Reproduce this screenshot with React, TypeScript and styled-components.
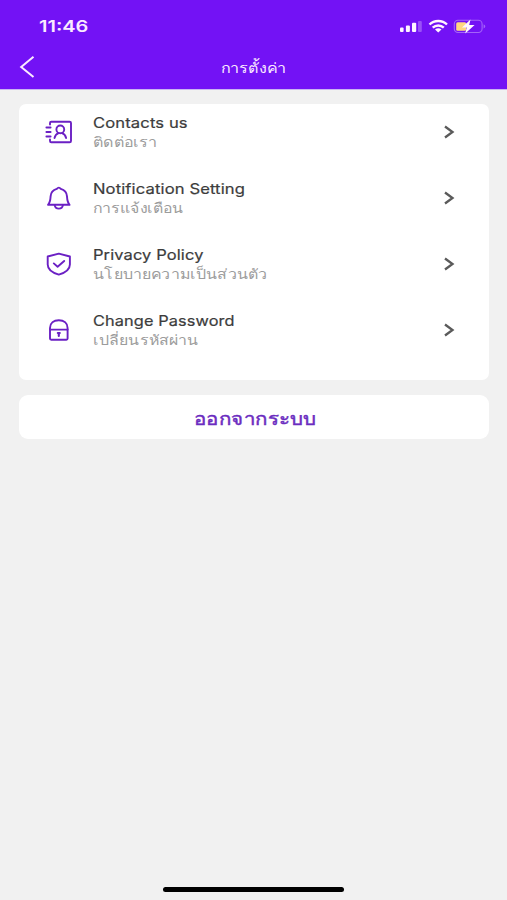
import React from "react";
import styled, { createGlobalStyle } from "styled-components";

const GlobalStyle = createGlobalStyle`
  * { box-sizing: border-box; }
  body { margin: 0; background: #f1f1f1; font-family: Inter, "Noto Sans", sans-serif; }
`;

const Screen = styled.main`
  display: flex;
  flex-direction: column;
  height: 900px;
  background: #f1f1f1;
  overflow: hidden;
`;

const Header = styled.header`
  height: 89px;
  background: #7312f5;
  box-shadow: 0 1px 0 #cbb4f3;
  color: #fbeaff;
`;

const StatusBar = styled.div`
  display: flex;
  align-items: center;
  justify-content: space-between;
  height: 51px;
  padding: 0 20px 0 39px;
`;

const Stretch = styled.span<{ $x: number; $origin?: string }>`
  display: inline-block;
  white-space: nowrap;
  transform: scaleX(${(p) => p.$x});
  transform-origin: ${(p) => p.$origin ?? "left"} center;
`;

const Clock = styled.div`
  font-size: 16px;
  font-weight: 600;
  line-height: 20px;
`;

const StatusIcons = styled.svg`
  display: block;
  width: 88px;
  height: 18px;
`;

const NavBar = styled.div`
  display: grid;
  grid-template-columns: 60px 1fr 60px;
  align-items: center;
  height: 32px;
`;

const BackButton = styled.button`
  display: flex;
  border: 0;
  padding: 0 0 0 19px;
  background: none;
  color: inherit;
`;

const Title = styled.h1`
  margin: 2px 0 0;
  font-size: 14px;
  font-weight: 400;
  line-height: 20px;
  text-align: center;
`;

const Content = styled.div`
  display: flex;
  flex-direction: column;
  flex: 1;
  gap: 15px;
  padding: 15px 18px 0 19px;
`;

const Card = styled.section`
  height: 276px;
  border-radius: 7px;
  background: #fff;
`;

const Row = styled.div`
  display: grid;
  grid-template-columns: 28px 1fr 12px;
  align-items: center;
  column-gap: 20px;
  height: 65.85px;
  padding: 0 34px 9px 26px;
`;

const RowIcon = styled.svg`
  display: block;
  width: 28px;
  height: 28px;
  fill: none;
  stroke: #6b20c4;
  stroke-width: 1.9;
  stroke-linejoin: round;
  stroke-linecap: round;
`;

const Labels = styled.div`
  display: flex;
  flex-direction: column;
  align-items: flex-start;
  margin-left: -0.5px;
`;

const Name = styled.div`
  font-size: 14px;
  font-weight: 400;
  line-height: 19px;
  letter-spacing: 0.1px;
  color: #3c3c3c;
  -webkit-text-stroke: 0.2px #3c3c3c;
`;

const Translation = styled.div`
  font-size: 14px;
  line-height: 19px;
  color: #9c9c9c;
`;

const Chevron = styled.svg`
  display: block;
  width: 12px;
  height: 14px;
  fill: none;
  stroke: #5a5a5a;
  stroke-width: 2.3;
`;

const LogoutButton = styled.button`
  height: 44px;
  padding: 4px 0 0;
  border: 0;
  border-radius: 9px;
  background: #fff;
  color: #6b2cc0;
  font-family: inherit;
  font-size: 18px;
  font-weight: 500;
  line-height: 24px;
  -webkit-text-stroke: 0.45px #6b2cc0;
`;

const HomeIndicator = styled.div`
  align-self: center;
  width: 181px;
  height: 5px;
  margin-bottom: 8px;
  border-radius: 3px;
  background: #000;
`;

const items = [
  {
    name: "Contacts us",
    nameScale: 1.185,
    translation: "ติดต่อเรา",
    translationScale: 1.15,
    icon: (
      <>
        <path d="M5 6.5V5Q5 3.7 6.3 3.7H24.6Q26 3.7 26 5V23Q26 24.3 24.6 24.3H6.3Q5 24.3 5 23V21.5" />
        <path d="M1.4 9.5H5.6M1.4 14H5.6M1.4 18.5H5.6" />
        <circle cx="15.3" cy="11.4" r="3.9" />
        <path d="M9.5 20C10 17.6 11.8 15.7 13.6 15.1M17 15.1C18.9 15.7 20.6 17.6 21.1 20" />
      </>
    ),
  },
  {
    name: "Notification Setting",
    nameScale: 1.185,
    translation: "การแจ้งเตือน",
    translationScale: 1.135,
    icon: (
      <>
        <path d="M3 20.8C5.3 18.4 5.4 15.8 5.6 12.4C5.8 8.7 8.5 5.9 11.8 4.9Q13.8 2.4 15.8 4.9C19.1 5.9 21.8 8.7 22 12.4C22.2 15.8 22.3 18.4 24.6 20.8Z" />
        <path d="M9.7 21.2C10.3 25.8 17.3 25.8 17.9 21.2" />
      </>
    ),
  },
  {
    name: "Privacy Policy",
    nameScale: 1.175,
    translation: "นโยบายความเป็นส่วนตัว",
    translationScale: 1.14,
    icon: (
      <>
        <path d="M13.8 3.6L24.9 6.5V14.5C24.9 19.4 20.8 22.6 13.8 24.6C6.8 22.6 2.7 19.4 2.7 14.5V6.5Z" />
        <path d="M8.8 13.4L12.6 16.8L19.2 11" />
      </>
    ),
  },
  {
    name: "Change Password",
    nameScale: 1.165,
    translation: "เปลี่ยนรหัสผ่าน",
    translationScale: 1.135,
    icon: (
      <>
        <path d="M5 13.6V12C5 7 8.8 4.3 13.8 4.3S22.6 7 22.6 12V13.6" />
        <path d="M5 13.6H22.6V22.6Q22.6 23.8 21.4 23.8H6.2Q5 23.8 5 22.6Z" />
        <path d="M12.8 17H14.8M13.8 17V20" strokeWidth="2.1" />
      </>
    ),
  },
];

export default function App() {
  return (
    <>
      <GlobalStyle />
      <Screen>
        <Header>
          <StatusBar>
            <Clock>
              <Stretch $x={1.25}>11:46</Stretch>
            </Clock>
            <StatusIcons viewBox="0 0 88 18">
              <g fill="#fff4ff">
                <rect x="1" y="10.5" width="3.6" height="4.5" rx="1" />
                <rect x="6.9" y="8.6" width="4" height="6.4" rx="1" />
                <rect x="13" y="5.8" width="4.2" height="9.2" rx="1" />
                <rect x="19" y="4" width="3.8" height="11" rx="1" opacity=".28" />
              </g>
              <g fill="none" stroke="#fff4ff" strokeWidth="2.4">
                <path d="M30.5 7.5C35.2 2.9 43.3 2.9 48 7.5" />
                <path d="M33.7 10.7C36.9 7.7 41.6 7.7 44.8 10.7" />
              </g>
              <path d="M36 12.5Q39.25 10.2 42.5 12.5L39.25 15.6Z" fill="#fff4ff" />
              <rect x="55.3" y="3.3" width="27.8" height="12.2" rx="3.7" fill="none" stroke="#a464f8" strokeWidth="1.1" />
              <path d="M84.6 7.3Q88 9.4 84.6 11.5Z" fill="#a464f8" />
              <rect x="57.2" y="5.3" width="10" height="8.4" rx="1.5" fill="#ffd780" />
              <path d="M71.5 2.6L63 10.4H67.8L66.2 16.4L75.6 8.1H70.2Z" fill="#fff8ff" />
            </StatusIcons>
          </StatusBar>
          <NavBar>
            <BackButton aria-label="Back">
              <svg width="17" height="24" viewBox="0 0 17 24" fill="none" stroke="currentColor" strokeWidth="2">
                <path d="M14.5 1.8L2.2 12L14.5 22" />
              </svg>
            </BackButton>
            <Title>
              <Stretch $x={1.15} $origin="center">การตั้งค่า</Stretch>
            </Title>
          </NavBar>
        </Header>
        <Content>
          <Card>
            {items.map((item) => (
              <Row key={item.name}>
                <RowIcon viewBox="0 0 28 28">{item.icon}</RowIcon>
                <Labels>
                  <Name>
                    <Stretch $x={item.nameScale}>{item.name}</Stretch>
                  </Name>
                  <Translation>
                    <Stretch $x={item.translationScale}>{item.translation}</Stretch>
                  </Translation>
                </Labels>
                <Chevron viewBox="0 0 12 14">
                  <path d="M2 1.5L9.5 7L2 12.5" />
                </Chevron>
              </Row>
            ))}
          </Card>
          <LogoutButton>
            <Stretch $x={1.14} $origin="center">ออกจากระบบ</Stretch>
          </LogoutButton>
        </Content>
        <HomeIndicator />
      </Screen>
    </>
  );
}
